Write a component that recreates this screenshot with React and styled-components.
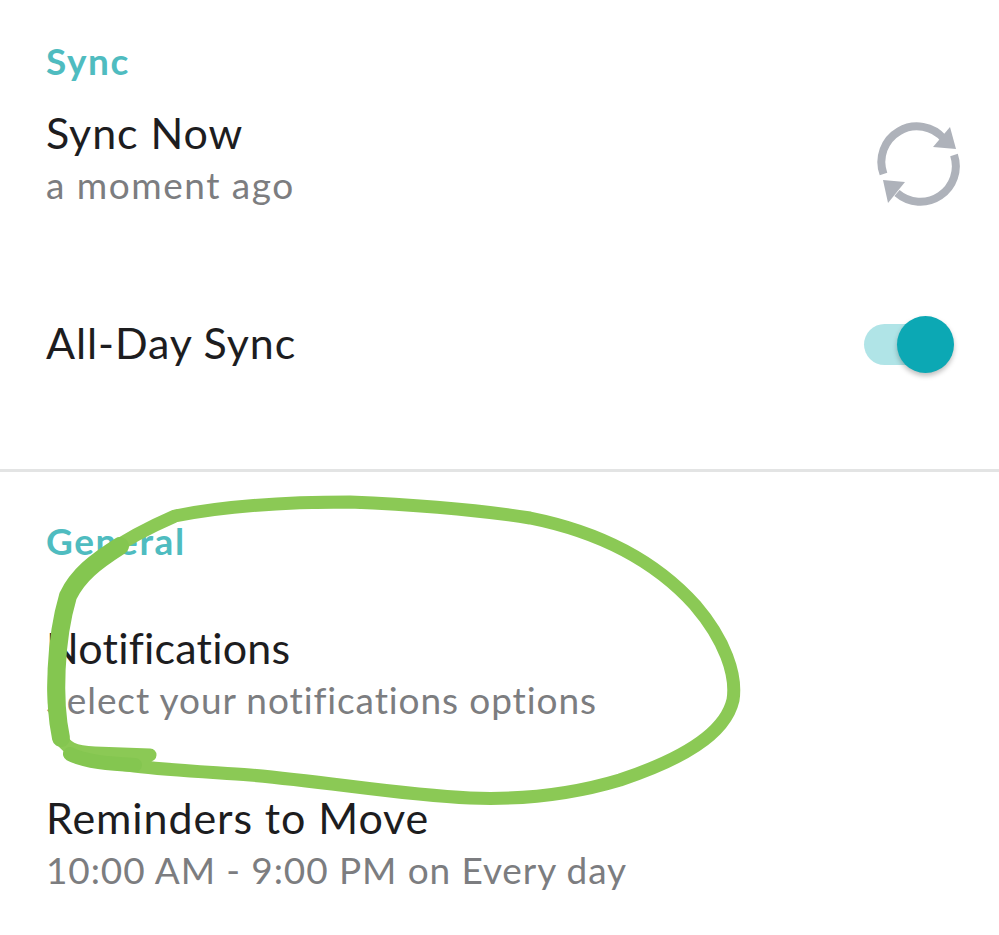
import React from "react";
import styled, { createGlobalStyle } from "styled-components";

const Global = createGlobalStyle`
  html, body { margin: 0; padding: 0; background: #fff; }
  body { font-family: "Lato", "Open Sans", sans-serif; overflow: hidden; }
`;

const Page = styled.div`
  position: relative;
  width: 999px;
  height: 935px;
  overflow: hidden;
  background: #fff;
`;

const Section = styled.section`
  display: flex;
  flex-direction: column;
  padding: ${(p) => p.$top}px 40px 0 46px;
  height: ${(p) => p.$height}px;
  box-sizing: border-box;
  border-bottom: ${(p) => (p.$divider ? "3px solid #e3e4e4" : "none")};
`;

const Heading = styled.h2`
  margin: 0 0 ${(p) => p.$gap}px;
  font-size: 37px;
  line-height: 43px;
  font-weight: 700;
  letter-spacing: 1.6px;
  color: #4fbcc0;
`;

const Row = styled.div`
  display: flex;
  align-items: center;
  justify-content: space-between;
  height: 104px;
  margin-top: ${(p) => p.$top || 0}px;
`;

const RowText = styled.div`
  display: flex;
  flex-direction: column;
`;

const Title = styled.div`
  font-size: 43px;
  line-height: 52px;
  font-weight: 400;
  letter-spacing: ${(p) => p.$spacing ?? 0.9}px;
  color: #1d1d1f;
`;

const Sub = styled.div`
  font-size: 37px;
  line-height: 52px;
  color: #7c7d80;
  letter-spacing: ${(p) => p.$spacing ?? 1}px;
`;

const SyncIcon = styled.svg`
  width: 86px;
  height: 86px;
  display: block;
  margin: 8px -1px 0 0;
`;

const Toggle = styled.div`
  position: relative;
  width: 90px;
  height: 56px;
  margin: 2px 5px 0 0;
`;

const Track = styled.div`
  position: absolute;
  left: 0;
  top: 8px;
  width: 78px;
  height: 41px;
  border-radius: 20.5px;
  background: #b0e4e7;
`;

const Knob = styled.div`
  position: absolute;
  left: 33px;
  top: 0;
  width: 57px;
  height: 57px;
  border-radius: 50%;
  background: #0ca8b4;
  box-shadow: 0 3px 5px rgba(0, 0, 0, 0.25);
`;

const Scribble = styled.svg`
  position: absolute;
  inset: 0;
  width: 999px;
  height: 935px;
  pointer-events: none;
`;

export default function App() {
  return (
    <Page>
      <Global />
      <Section $height={472} $top={39} $divider>
        <Heading $gap={25}>Sync</Heading>
        <Row>
          <RowText>
            <Title>Sync Now</Title>
            <Sub $spacing={1.5}>a moment ago</Sub>
          </RowText>
          <SyncIcon viewBox="0 0 86 86" fill="none" aria-hidden="true">
            <path d="M9.5 54 A35.5 35.5 0 0 1 70 19" stroke="#aeb2ba" strokeWidth="8" />
            <path d="M76 7 L82 29 L59 27 Z" fill="#aeb2ba" strokeLinejoin="round" />
            <path d="M80 35 A35.5 35.5 0 0 1 23 73" stroke="#aeb2ba" strokeWidth="8" />
            <path d="M9 60 L31 62 L14 83 Z" fill="#aeb2ba" strokeLinejoin="round" />
          </SyncIcon>
        </Row>
        <Row $top={80}>
          <Title>All-Day Sync</Title>
          <Toggle>
            <Track />
            <Knob />
          </Toggle>
        </Row>
      </Section>
      <Section $height={463} $top={47}>
        <Heading $gap={60}>General</Heading>
        <Row>
          <RowText>
            <Title $spacing={0.2}>Notifications</Title>
            <Sub $spacing={0.9}>Select your notifications options</Sub>
          </RowText>
        </Row>
        <Row $top={66}>
          <RowText>
            <Title>Reminders to Move</Title>
            <Sub $spacing={0.9}>10:00 AM - 9:00 PM on Every day</Sub>
          </RowText>
        </Row>
      </Section>
      <Scribble viewBox="0 0 999 935" fill="none" aria-hidden="true">
        <path
          d="M150 755 L95 753 C75 752 64 748 60 735 C54 715 52 690 56 660 C58 635 62 610 70 590 C85 565 120 540 175 516 C230 505 300 502 350 502 C420 505 480 510 530 518 C590 530 650 555 695 605 C725 640 737 675 733 700 C725 735 680 760 620 780 C570 795 520 800 470 798 C400 795 330 782 250 775 C180 770 110 768 70 752"
          stroke="#8bc955"
          strokeWidth="13"
          strokeLinecap="round"
          strokeLinejoin="round"
        />
        <path d="M61 738 C53 700 55 640 68 596 C78 575 95 562 120 546" stroke="#84c650" strokeWidth="18" strokeLinecap="round" />
        <path d="M70 754 C85 762 110 764 135 765" stroke="#84c650" strokeWidth="14" strokeLinecap="round" />
      </Scribble>
    </Page>
  );
}
